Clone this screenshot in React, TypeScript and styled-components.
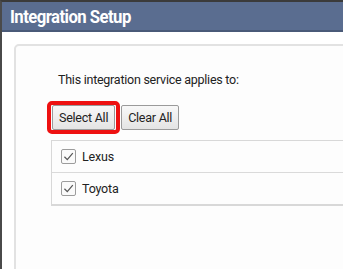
import React, { useState } from 'react';
import styled, { createGlobalStyle } from 'styled-components';

const GlobalStyle = createGlobalStyle`
  html, body {
    margin: 0;
    padding: 0;
    background: #ffffff;
    font-family: Roboto, 'Liberation Sans', Arial, sans-serif;
  }
`;

const Frame = styled.div`
  width: 343px;
  height: 269px;
  overflow: hidden;
  border-top: 2px solid #3b3b3b;
  border-left: 2px solid #4a4a4a;
  box-sizing: border-box;
  background: #ffffff;
  display: flex;
  flex-direction: column;
`;

const Header = styled.div`
  height: 28px;
  flex: none;
  background: #5a6d90;
  border-bottom: 2px solid #4a5a78;
  display: flex;
  align-items: center;
  padding-left: 8px;
`;

const Title = styled.h1`
  margin: 0;
  color: #ffffff;
  font-size: 18px;
  font-weight: 700;
  letter-spacing: -0.6px;
  transform: scaleX(0.93);
  transform-origin: left center;
`;

const Body = styled.div`
  flex: 1;
  padding: 12px 0 0 12px;
  display: flex;
`;

const Panel = styled.div`
  flex: 1;
  margin-right: -10px;
  margin-bottom: -10px;
  border: 2px solid #e2e2e2;
  border-radius: 5px;
  background: #fdfdfd;
  padding: 26px 0 0 31px;
`;

const Intro = styled.div`
  font-size: 12.5px;
  letter-spacing: -0.25px;
  color: #222222;
  margin-left: 11px;
  line-height: 16px;
`;

const ButtonRow = styled.div`
  display: flex;
  align-items: center;
  gap: 1px;
  margin-top: 13px;
`;

const Highlight = styled.div`
  border: 4px solid #ee1111;
  border-radius: 5px;
  padding: 0 1px;
  display: flex;
`;

const Btn = styled.button`
  font-family: Roboto, 'Liberation Sans', Arial, sans-serif;
  font-size: 12.5px;
  letter-spacing: -0.25px;
  color: #222222;
  height: 25px;
  padding: 0 6px;
  background: linear-gradient(#f8f8f8, #e4e4e4);
  border: 1px solid #9a9a9a;
  border-radius: 2px;
  cursor: pointer;
`;

const List = styled.div`
  margin-top: 6px;
  margin-left: 4px;
  border: 1px solid #d8d8d8;
  border-right: none;
  border-bottom: 2px solid #d8d8d8;
`;

const Row = styled.label<{ first?: boolean }>`
  display: flex;
  align-items: center;
  height: 31px;
  padding-left: 9px;
  gap: 6px;
  font-size: 12.5px;
  letter-spacing: -0.2px;
  color: #222222;
  border-top: ${p => (p.first ? 'none' : '1px solid #dadada')};
  cursor: pointer;
`;

const Box = styled.span`
  width: 13px;
  height: 13px;
  border: 1px solid #9c9c9c;
  border-radius: 2px;
  background: #fafafa;
  display: flex;
  align-items: center;
  justify-content: center;
`;

const items = ['Lexus', 'Toyota'];

export default function App() {
  const [checked, setChecked] = useState<Record<string, boolean>>({ Lexus: true, Toyota: true });

  return (
    <>
      <GlobalStyle />
      <Frame>
        <Header>
          <Title>Integration Setup</Title>
        </Header>
        <Body>
          <Panel>
            <Intro>This integration service applies to:</Intro>
            <ButtonRow>
              <Highlight>
                <Btn onClick={() => setChecked({ Lexus: true, Toyota: true })}>Select All</Btn>
              </Highlight>
              <Btn onClick={() => setChecked({ Lexus: false, Toyota: false })}>Clear All</Btn>
            </ButtonRow>
            <List>
              {items.map((name, i) => (
                <Row key={name} first={i === 0} onClick={() => setChecked({ ...checked, [name]: !checked[name] })}>
                  <Box>
                    {checked[name] && (
                      <svg width="11" height="11" viewBox="0 0 10 10">
                        <path d="M1.3 5.2 L3.9 7.9 L8.9 1.9" fill="none" stroke="#555" strokeWidth="1.1" />
                      </svg>
                    )}
                  </Box>
                  {name}
                </Row>
              ))}
            </List>
          </Panel>
        </Body>
      </Frame>
    </>
  );
}
